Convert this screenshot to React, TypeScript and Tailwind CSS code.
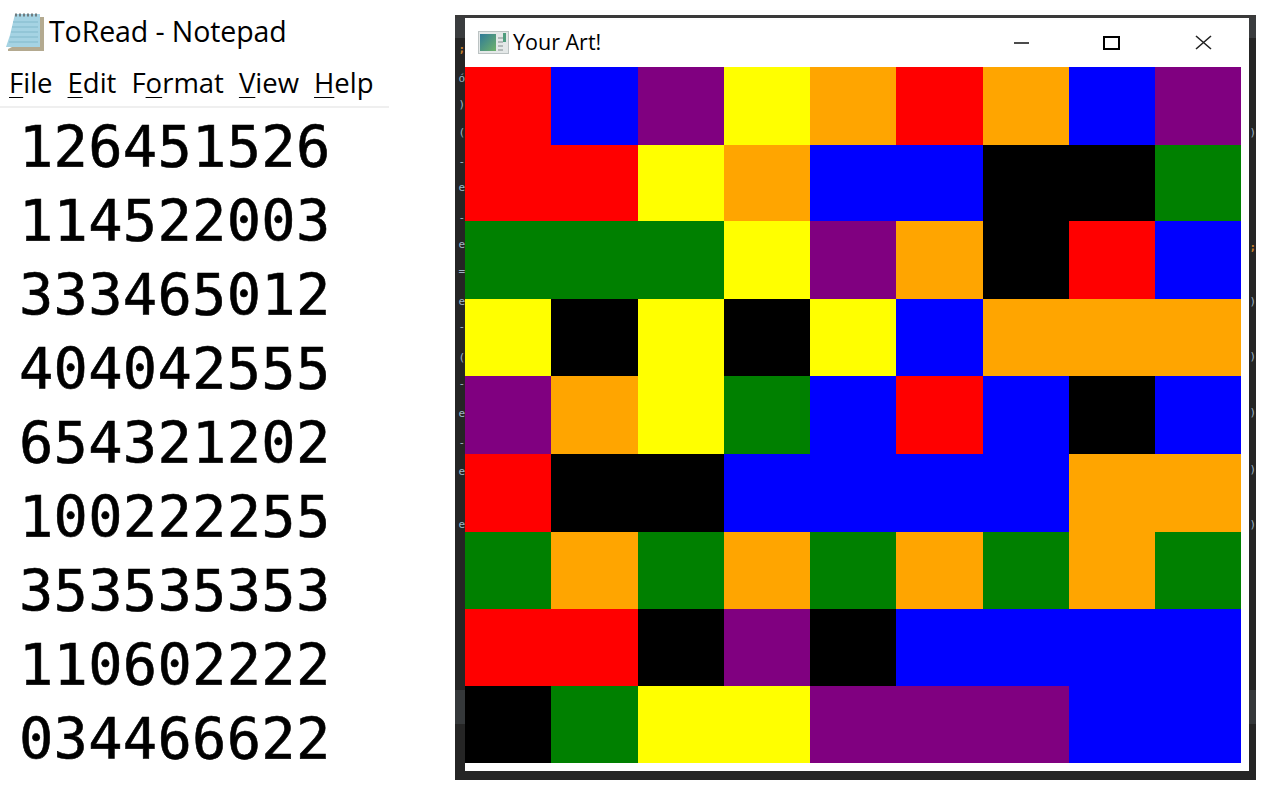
import React from "react";

const swatches: Record<string, string> = {
  r: "bg-[#ff0000]",
  b: "bg-[#0000ff]",
  p: "bg-[#800080]",
  y: "bg-[#ffff00]",
  o: "bg-[#ffa500]",
  g: "bg-[#008000]",
  k: "bg-[#000000]",
};

const art = [
  "rbpyorobp",
  "rryobbkkg",
  "gggypokrb",
  "ykykybooo",
  "poygbrbkb",
  "rkkbbbboo",
  "gogogogog",
  "rrkpkbbbb",
  "kgyypppbb",
];

const numbers = [
  "126451526",
  "114522003",
  "333465012",
  "404042555",
  "654321202",
  "100222255",
  "353535353",
  "110602222",
  "034466622",
];

// bits of the code editor that show behind the window, in its frame
const leftGlyphs = [
  { top: 22, text: ";", orange: true },
  { top: 51, text: "ó" },
  { top: 77, text: ")" },
  { top: 105, text: "(" },
  { top: 134, text: "-" },
  { top: 160, text: "e" },
  { top: 190, text: "-" },
  { top: 217, text: "e" },
  { top: 244, text: "=" },
  { top: 274, text: "e" },
  { top: 299, text: "-" },
  { top: 330, text: "(" },
  { top: 356, text: "-" },
  { top: 386, text: "e" },
  { top: 415, text: "-" },
  { top: 444, text: "e" },
  { top: 497, text: "e" },
];

const rightGlyphs = [
  { top: 105, text: ")" },
  { top: 220, text: ";", orange: true },
  { top: 274, text: ")" },
  { top: 329, text: ")" },
  { top: 385, text: ")" },
  { top: 442, text: ")" },
  { top: 497, text: ")" },
];

const NotepadIcon = () => (
  <svg width="39" height="39" viewBox="0 0 39 39" className="shrink-0">
    <path d="M3 36l4-2h27V4h5v34H3z" fill="#b4aa90" />
    <path d="M10 1h25v33H1l4-12z" fill="#a5d3e3" />
    <path d="M8 9h25M7 14h26M6 19h27M5 24h28M4 29h29" stroke="#8dc2d4" strokeWidth="1.5" />
    <path d="M10 2h24" stroke="#6f7c80" strokeWidth="3" strokeDasharray="2 2" />
  </svg>
);

const ArtIcon = () => (
  <svg width="31" height="23" viewBox="0 0 31 23" className="shrink-0">
    <defs>
      <linearGradient id="art" x1="0" y1="0" x2="1" y2="1">
        <stop offset="0" stopColor="#2f7a98" />
        <stop offset="1" stopColor="#6fb36a" />
      </linearGradient>
    </defs>
    <rect x="0.5" y="0.5" width="30" height="22" fill="#e4e8e8" stroke="#bcc3c3" />
    <rect x="2" y="3" width="16" height="17" fill="url(#art)" />
    <path d="M20 7h5M20 11h5M20 15h5M20 19h5" stroke="#a2abab" strokeWidth="1.5" />
    <rect x="25" y="2" width="3" height="9" fill="#4f9d7e" />
  </svg>
);

const Menu = ({ letter, rest, first = "" }: { letter: string; rest: string; first?: string }) => (
  <span>
    {first}
    <span className="underline decoration-1 underline-offset-[4px]">{letter}</span>
    {rest}
  </span>
);

const FrameStrip = ({ glyphs, className }: { glyphs: { top: number; text: string; orange?: boolean }[]; className: string }) => (
  <div className={`relative h-full shrink-0 ${className}`}>
    <div className="absolute inset-x-0 top-0 h-[20px] bg-[#3a3c3e]" />
    <div className="absolute inset-x-0 top-[672px] h-[34px] bg-[#35383a]" />
    {glyphs.map((g) => (
      <span
        key={g.top}
        className={`absolute left-0 w-full text-right font-['DejaVu_Sans_Mono',monospace] text-[11px] leading-[20px] ${g.orange ? "font-bold text-[#c47f2c]" : "text-[#9db4c4]"}`}
        style={{ top: g.top }}
      >
        {g.text}
      </span>
    ))}
  </div>
);

export default function App() {
  return (
    <div className="flex h-[786px] w-[1264px] overflow-hidden bg-white text-black">
      <div className="w-[455px] shrink-0">
        <div className="flex h-[62px] items-center gap-[5px] pl-[5px] pt-[2px] font-['Open_Sans',sans-serif] text-[28.5px]">
          <NotepadIcon />
          <span className="-mt-[2px] tracking-[-0.1px]">ToRead - Notepad</span>
        </div>
        <div className="flex h-[46px] w-[389px] items-center gap-[15px] border-b-2 border-[#efefef] pb-[2px] pl-[9px] font-['Open_Sans',sans-serif] text-[27.5px] leading-none">
          <Menu letter="F" rest="ile" />
          <Menu letter="E" rest="dit" />
          <Menu first="F" letter="o" rest="rmat" />
          <Menu letter="V" rest="iew" />
          <Menu letter="H" rest="elp" />
        </div>
        <div className="pl-[19px] pt-[2px] font-['DejaVu_Sans_Mono',monospace] text-[57px] leading-[74px] tracking-[0.3px] [-webkit-text-stroke:0.6px_black]">
          {numbers.map((n) => (
            <div key={n}>{n}</div>
          ))}
        </div>
      </div>

      <div className="mt-[15px] flex h-[765px] w-[801px] shrink-0 border-t-[3px] border-[#3a3a3a] bg-[#252525] pb-[9px]">
        <FrameStrip glyphs={leftGlyphs} className="w-[10px]" />
        <div className="h-full flex-1 bg-white pr-[8px]">
          <div className="flex h-[49px] items-center pr-[29px] font-['Open_Sans',sans-serif] text-[21.5px]">
            <div className="flex flex-1 items-center gap-[4px] pl-[13px]">
              <ArtIcon />
              <span>Your Art!</span>
            </div>
            <div className="flex items-center gap-[74px]">
              <svg width="15" height="2" viewBox="0 0 15 2">
                <path d="M0 1h15" stroke="#111" strokeWidth="1.5" />
              </svg>
              <div className="h-[14px] w-[17px] border-2 border-black" />
              <svg width="17" height="15" viewBox="0 0 17 15" className="ml-[1px]">
                <path d="M1 1l15 13M16 1L1 14" stroke="#222" strokeWidth="1.6" fill="none" />
              </svg>
            </div>
          </div>
          <div className="grid grid-cols-[86px_87px_86px_86px_86px_87px_86px_86px_86px] grid-rows-[78px_76px_78px_77px_78px_78px_77px_77px_77px]">
            {art.flatMap((row, i) =>
              row.split("").map((c, j) => <div key={`${i}-${j}`} className={swatches[c]} />),
            )}
          </div>
        </div>
        <FrameStrip glyphs={rightGlyphs} className="w-[7px]" />
      </div>
    </div>
  );
}
